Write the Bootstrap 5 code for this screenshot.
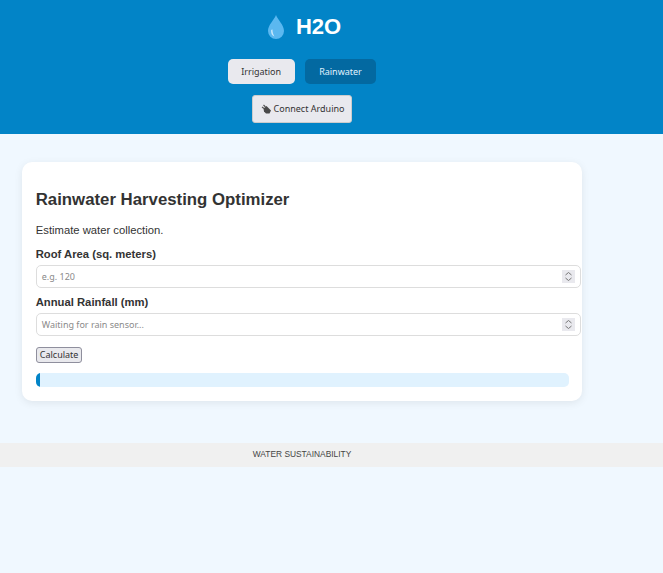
<!DOCTYPE html>
<html lang="en">
<head>
  <meta charset="utf-8">
  <title>H2O</title>
  <link href="https://cdn.jsdelivr.net/npm/bootstrap@5.3.2/dist/css/bootstrap.min.css" rel="stylesheet" />
  <style>
    body {
        background-color: #f0f8ff;
        font-family: "Liberation Sans", Arial, sans-serif;
        color: #333;
        min-height: 573px;
    }
    .site-head {
        background-color: #0284c7;
        height: 134px;
        padding-right: 59px;
    }
    .site-title {
        font-size: 22px;
        font-weight: 700;
        line-height: 28px;
        color: #fff;
        margin: 13px 0 18px;
        padding-left: 3px;
        gap: 10px;
    }
    .tab-btn, .connect-btn {
        font-family: "Noto Sans", sans-serif;
        font-size: 9px;
        border: 0;
        border-radius: 5px;
        background-color: #e9e9ee;
        color: #333;
        height: 25px;
        padding: 0 13.5px;
    }
    .tab-btn.is-on {
        background-color: #0369a1;
        color: #e0f2fe;
        padding: 0 14.5px;
    }
    .connect-btn {
        height: 28px;
        padding: 0 7px 0 8px;
        border: 1px solid #ccc;
        border-radius: 3px;
        margin-top: 11px;
        gap: 2px;
    }
    .page-wrap {
        width: 604px;
        padding: 28px 22px 42px 21.75px;
    }
    .tool-box {
        background: #fff;
        border-radius: 10px;
        box-shadow: 0 2px 8px rgba(0, 0, 0, .08);
        height: 239px;
        padding: 27px 14px 14px;
    }
    .tool-box h2 {
        font-size: 16.8px;
        font-weight: 700;
        line-height: 22px;
        color: #333;
        margin-bottom: 12px;
    }
    .tool-box p {
        font-size: 11.25px;
        line-height: 14px;
        margin-bottom: 10px;
    }
    .tool-box label {
        display: block;
        font-size: 11.25px;
        font-weight: 700;
        line-height: 14px;
        margin-bottom: 4px;
    }
    .num-field {
        height: 23px;
        width: 545px;
        border: 1px solid #ddd;
        border-radius: 5px;
        background: #fff;
        padding: 0 5px;
        margin-bottom: 7px;
        font-family: "Noto Sans", sans-serif;
        font-size: 9px;
        color: #8a8a8a;
    }
    .spin-box {
        width: 13px;
        height: 13px;
        background: #e9e9ee;
    }
    .calc-btn {
        font-family: "Noto Sans", sans-serif;
        font-size: 9px;
        line-height: 12px;
        height: 15.5px;
        padding: 0 3px;
        margin-top: 11px;
        background: #e9e9ed;
        border: 1px solid #8f8f9d;
        border-radius: 3px;
        color: #333;
    }
    .rain-track {
        height: 14px;
        width: 533px;
        background: #e0f2fe;
        border-radius: 5px;
        margin-top: 10.5px;
        overflow: hidden;
    }
    .rain-fill {
        width: 4px;
        height: 100%;
        background: #0284c7;
    }
    .site-foot {
        background: #f0f0f0;
        height: 24px;
        padding: 0 59px 1px 0;
        font-size: 8.4px;
        color: #444;
    }
  </style>
</head>
<body>
<header class="site-head d-flex flex-column align-items-center overflow-hidden">
  <div class="site-title d-flex align-items-center">
    <svg width="20" height="26" viewBox="0 0 20 26" aria-hidden="true">
      <path d="M10 1C8 6 2 11 2 17a8 8 0 0 0 16 0C18 11 12 6 10 1Z" fill="#5bb8f0"/>
      <path d="M5 17c0 3 1.500 5 3.500 5.500C7 20 6.500 18 6.500 15.500 5.500 15.500 5 16 5 17Z" fill="#c4e6fb"/>
    </svg>
    <span>H2O</span>
  </div>
  <div class="d-flex" style="gap:10px">
    <button class="tab-btn" type="button">Irrigation</button>
    <button class="tab-btn is-on" type="button">Rainwater</button>
  </div>
  <button class="connect-btn d-flex align-items-center" type="button">
    <svg width="11" height="11" viewBox="0 0 11 11" aria-hidden="true">
      <path d="M2.500 4.500 5.500 2 10 6.500 8.500 9.500 5 9.500 3 7.500Z" fill="#4a4a4a"/>
      <path d="M3 4.500 1 3M4.500 3 2.500 1" stroke="#555" stroke-width="1.200"/>
    </svg>
    <span>Connect Arduino</span>
  </button>
</header>

<main class="page-wrap">
  <section class="tool-box">
    <h2>Rainwater Harvesting Optimizer</h2>
    <p>Estimate water collection.</p>
    <label>Roof Area (sq. meters)</label>
    <div class="num-field d-flex align-items-center justify-content-between">
      <span>e.g. 120</span>
      <span class="spin-box d-flex align-items-center justify-content-center">
        <svg width="9" height="11" viewBox="0 0 9 11" aria-hidden="true"><path d="M1.500 4 4.500 1.500 7.500 4M1.500 7 4.500 9.500 7.500 7" fill="none" stroke="#777" stroke-width="1"/></svg>
      </span>
    </div>
    <label>Annual Rainfall (mm)</label>
    <div class="num-field d-flex align-items-center justify-content-between">
      <span>Waiting for rain sensor...</span>
      <span class="spin-box d-flex align-items-center justify-content-center">
        <svg width="9" height="11" viewBox="0 0 9 11" aria-hidden="true"><path d="M1.500 4 4.500 1.500 7.500 4M1.500 7 4.500 9.500 7.500 7" fill="none" stroke="#777" stroke-width="1"/></svg>
      </span>
    </div>
    <button class="calc-btn d-block" type="button">Calculate</button>
    <div class="rain-track"><div class="rain-fill"></div></div>
  </section>
</main>

<footer class="site-foot d-flex align-items-center justify-content-center">WATER SUSTAINABILITY</footer>
<script src="https://cdn.jsdelivr.net/npm/bootstrap@5.3.2/dist/js/bootstrap.bundle.min.js"></script>
</body>
</html>
